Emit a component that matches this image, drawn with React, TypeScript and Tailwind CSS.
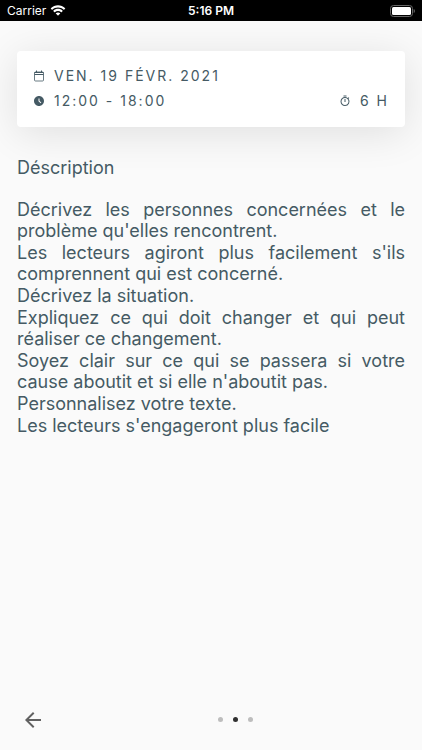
import { MdAccessTimeFilled, MdArrowBack, MdOutlineTimer } from "react-icons/md";

const paragraphs = [
  "Décrivez les personnes concernées et le problème qu'elles rencontrent.",
  "Les lecteurs agiront plus facilement s'ils comprennent qui est concerné.",
  "Décrivez la situation.",
  "Expliquez ce qui doit changer et qui peut réaliser ce changement.",
  "Soyez clair sur ce qui se passera si votre cause aboutit et si elle n'aboutit pas.",
  "Personnalisez votre texte.",
  "Les lecteurs s'engageront plus facile",
];

const pages = ["Page 1", "Page 2", "Page 3"];

const WifiIcon = () => (
  <svg viewBox="0 0 16 12" className="w-4 h-3" fill="currentColor">
    <path d="M8 2.4c2.2 0 4.2.9 5.7 2.3.1.1.3.1.4 0l1.1-1.1c.1-.1.1-.3 0-.4C11.2-.7 4.8-.7.8 3.2c-.1.1-.1.3 0 .4l1.1 1.1c.1.1.3.1.4 0C3.8 3.3 5.8 2.4 8 2.4z" />
    <path d="M8 6c1.2 0 2.3.5 3.2 1.2.1.1.3.1.4 0l1.1-1.1c.1-.1.1-.3 0-.4-2.7-2.5-6.7-2.5-9.4 0-.1.1-.1.3 0 .4l1.1 1.1c.1.1.3.1.4 0C5.7 6.5 6.8 6 8 6z" />
    <path d="M10.2 8.6c.1-.1.1-.3 0-.4-1.3-1.1-3.1-1.1-4.4 0-.1.1-.1.3 0 .4l2 2c.1.1.3.1.4 0z" />
  </svg>
);

const BatteryIcon = () => (
  <svg viewBox="0 0 25 12" className="w-[25px] h-3">
    <rect x="0.5" y="0.5" width="22" height="11" rx="3" fill="none" stroke="#666" />
    <rect x="2" y="2" width="19" height="8" rx="1.5" fill="#fff" />
    <path d="M23.7 4v4c.7-.3 1.2-1.1 1.2-2s-.5-1.7-1.2-2z" fill="#666" />
  </svg>
);

const CalendarIcon = () => (
  <svg viewBox="0 0 12 12" className="w-3 h-3" fill="none" stroke="currentColor">
    <rect x="1.5" y="2" width="9" height="9" rx="1" strokeOpacity="0.8" />
    <path d="M1.5 2.5h9M1.5 4.5h9M3.5 0.5v2M8.5 0.5v2" />
  </svg>
);

const StatusBar = () => (
  <header className="grid grid-cols-3 items-center h-[21px] px-[7px] bg-black text-white text-xs leading-5">
    <div className="flex items-center gap-1">
      <span>Carrier</span>
      <WifiIcon />
    </div>
    <span className="text-center font-semibold">5:16 PM</span>
    <div className="flex justify-end">
      <BatteryIcon />
    </div>
  </header>
);

const ScheduleCard = () => (
  <section className="flex flex-col gap-1 rounded bg-white px-4 pt-3.5 pb-4 text-sm leading-[21px] tracking-[2px] shadow-[0_6px_40px_rgba(0,0,0,0.11)]">
    <div className="flex items-center gap-[9px]">
      <CalendarIcon />
      <span>VEN. 19 FÉVR. 2021</span>
    </div>
    <div className="flex items-center justify-between">
      <div className="flex items-center gap-[9px]">
        <MdAccessTimeFilled className="w-3 h-3" />
        <span>12:00 - 18:00</span>
      </div>
      <div className="flex items-center gap-[9px]">
        <MdOutlineTimer className="w-3 h-3" />
        <span>6 H</span>
      </div>
    </div>
  </section>
);

const App = () => {
  return (
    <div className="flex flex-col min-h-screen bg-[#fafafa] text-[#455a64] font-['Inter',sans-serif]">
      <StatusBar />
      <main className="flex flex-col flex-1 px-[17px] pt-[30px]">
        <ScheduleCard />
        <h1 className="mt-[30px] text-lg leading-[21px]">Déscription</h1>
        <div className="flex flex-col gap-px mt-[21px] text-lg leading-[21px] text-justify">
          {paragraphs.map((text) => (
            <p key={text}>{text}</p>
          ))}
        </div>
      </main>
      <footer className="flex items-center h-[61px] px-[21px]">
        <button type="button" aria-label="Retour" className="text-[#616161]">
          <MdArrowBack className="w-6 h-6" />
        </button>
        <nav className="flex flex-1 justify-center gap-2.5 pl-[25px]">
          {pages.map((page, index) => (
            <button
              key={page}
              type="button"
              aria-label={page}
              className={
                index === 1
                  ? "w-[5px] h-[5px] rounded-full bg-[#303030]"
                  : "w-[5px] h-[5px] rounded-full bg-[#bdbdbd]"
              }
            />
          ))}
        </nav>
      </footer>
    </div>
  );
};

export default App;
